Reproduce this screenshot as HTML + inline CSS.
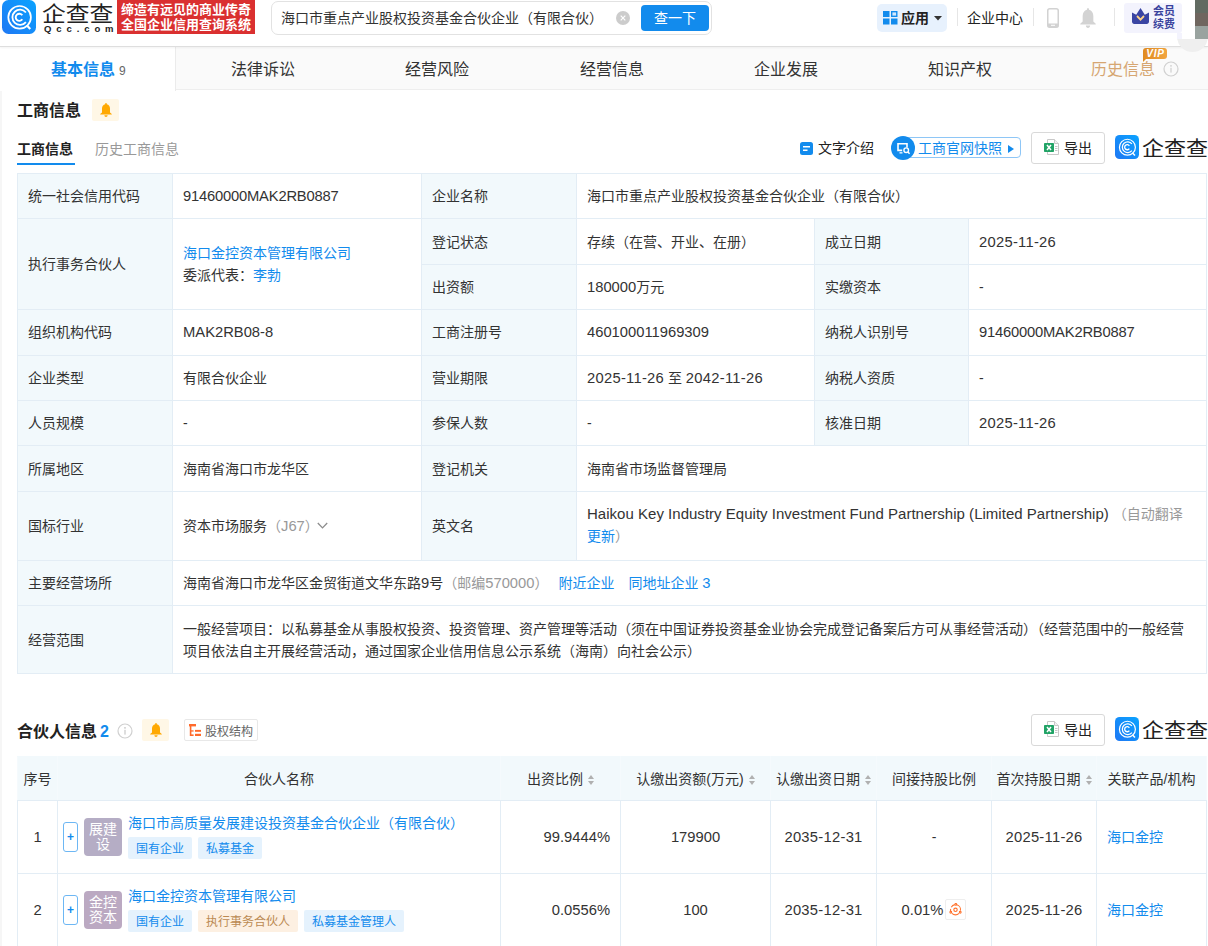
<!DOCTYPE html>
<html lang="zh-CN">
<head>
<meta charset="utf-8">
<title>海口市重点产业股权投资基金合伙企业（有限合伙） - 企查查</title>
<style>
*{box-sizing:border-box;margin:0;padding:0}
html,body{width:1208px;height:946px;overflow:hidden;background:#fff}
body{font-family:"Liberation Sans","Noto Sans CJK SC",sans-serif;font-size:14px;color:#333;position:relative;line-height:22px}
a{color:#128bed;text-decoration:none}
i{font-style:normal}
.abs{position:absolute}
#lstrip{position:absolute;left:0;top:47px;width:2px;height:899px;background:#f6f6f6}
#hd{position:absolute;left:0;top:0;width:1208px;height:47px;background:#fff;border-bottom:1px solid #dedede;box-shadow:0 1px 2px rgba(0,0,0,.05);z-index:5}
#logo-cn{position:absolute;left:42px;top:-1px;font-size:21px;line-height:30px;font-weight:400;color:#222;white-space:nowrap;transform:scaleX(1.13);transform-origin:0 0}
#logo-en{position:absolute;left:44px;top:22px;font-size:9.5px;line-height:14px;font-weight:700;color:#222;letter-spacing:4.9px;white-space:nowrap}
#slogan{position:absolute;left:117px;top:0;width:138px;height:34px;background:#da3030;color:#fff;font-weight:700;font-size:13px;line-height:15px;padding:2px 0 0 4px;white-space:nowrap}
#sbox{position:absolute;left:271px;top:1px;width:441px;height:34px;border:1px solid #e2e2e2;border-radius:7px;background:#fff}
#sbox .t{position:absolute;left:9px;top:5px;font-size:14px;line-height:22px;color:#333;white-space:nowrap}
#sbox .clr{position:absolute;left:344px;top:9px}
#sbox .btn{position:absolute;left:369px;top:3px;width:68px;height:26px;border-radius:4px;background:#128bed;color:#fff;font-size:14px;line-height:26px;text-align:center}
#app{position:absolute;left:877px;top:4px;width:70px;height:28px;border-radius:5px;background:#e7f1fd}
#app .t{position:absolute;left:24px;top:3px;font-size:14px;font-weight:700;color:#222;white-space:nowrap}
.vdiv{position:absolute;top:8px;width:1px;height:18px;background:#e6e6e6}
#vip{position:absolute;left:1124px;top:3px;width:58px;height:30px;border-radius:3px;background:#f3f3fd}
#vip .t{position:absolute;left:29px;top:2px;font-size:11px;line-height:13.4px;font-weight:700;color:#3a439e;white-space:nowrap}
#acirc{position:absolute;left:1177px;top:39px;width:31px;height:14px;overflow:hidden;z-index:6}
#acirc i{position:absolute;left:0;top:-18px;width:31px;height:31px;border-radius:50%;background:#efefef}
#alav{position:absolute;left:1177px;top:33px;width:5px;height:6px;background:#f3f3fd;z-index:6}
#awhite{position:absolute;left:1182px;top:0;width:13px;height:39px;background:#fff;z-index:7}
#avatar{position:absolute;left:1195px;top:0;width:13px;height:39px;z-index:7}
#avatar i{display:block;width:13px}
#nav{position:absolute;left:0;top:47px;width:1208px;height:43px;background:#fafafa;border-bottom:1px solid #eee}
#nav .on{position:absolute;left:0;top:0;width:176px;height:44px;background:#fff;border-right:1px solid #ebebeb}
#nav .it{position:absolute;top:11px;font-size:16px;line-height:24px;color:#333;white-space:nowrap}
#vipb{position:absolute;left:1143px;top:1px;width:24px;height:11px;border-radius:3px 3px 3px 0;background:linear-gradient(90deg,#e08a20,#f2a540);color:#fff;font-size:10px;line-height:11px;font-weight:700;font-style:italic;text-align:center;letter-spacing:.8px;padding-left:1px}
#vipb:after{content:"";position:absolute;left:0;top:11px;border-left:3px solid #e08a20;border-bottom:3px solid transparent}
h3{position:absolute;font-size:16px;line-height:24px;font-weight:700;color:#222;white-space:nowrap}
.bell{position:absolute;width:27px;height:22px;background:#fff7e6;border-radius:2px}
table{position:absolute;border-collapse:collapse;table-layout:fixed}
td,th{border:1px solid #e3edf5;font-size:14px;line-height:22px;color:#333;font-weight:400;text-align:left;vertical-align:middle;padding:0 10px}
td.k{background:#f2f9fc}
.g{color:#999}
td.c{text-align:center;padding:0}
td.r{text-align:right;padding:0 10px 0 0}
.st{margin-left:5px;vertical-align:-1px}
.exp{position:absolute;width:74px;height:32px;border:1px solid #d9d9d9;border-radius:3px;background:#fff}
.exp .t{position:absolute;left:32px;top:4px;white-space:nowrap;color:#222}
.wm{position:absolute;width:93px;height:26px}
.wm .t{position:absolute;left:27px;top:-1px;font-size:20px;line-height:30px;font-weight:400;color:#222;white-space:nowrap;transform:scaleX(1.1);transform-origin:0 0}
#snap{position:absolute;left:891px;top:136px;width:131px;height:24px}
#snap .pill{position:absolute;left:10px;top:1px;width:120px;height:21px;border:1px solid #8ec6f6;border-radius:4px;background:#fff}
#snap .t{position:absolute;left:27px;top:1px;white-space:nowrap;color:#128bed}
#gq{position:absolute;left:184px;top:719px;width:74px;height:22px;border:1px solid #e8e8e8;border-radius:2px}
#gq .t{position:absolute;left:20px;top:.5px;font-size:12px;color:#666;white-space:nowrap}
td.p{position:relative;padding:0}
.plus{position:absolute;left:5px;top:21px;width:15px;height:30px;border:1px solid #6db7f4;border-radius:3px;color:#128bed;font-size:12px;font-weight:700;line-height:28px;text-align:center}
.av{position:absolute;left:26px;top:17px;width:38px;height:38px;border-radius:4px;color:#fff;font-size:14px;line-height:15px;text-align:center;padding-top:4px}
.nm{position:absolute;left:70px;top:11px;white-space:nowrap}
.tags{position:absolute;left:70px;top:36px;white-space:nowrap;font-size:0}
.tags b{display:inline-block;height:22px;line-height:24px;overflow:hidden;vertical-align:top;padding:0 8px;margin-right:6px;border-radius:2px;background:#e5f2fd;color:#128bed;font-size:12px;font-weight:400}
.tags b.o{background:#fdf0e2;color:#bb8a52}
.gico{display:inline-block;width:21px;height:21px;border:1px solid #eee;border-radius:2px;vertical-align:middle;margin-left:2px;position:relative;top:-1px}
.gico svg{position:absolute;left:3px;top:3px}
tr.h td{border-left-color:#f5fafd;border-right-color:#f5fafd;border-top-color:#f2f9fc}
.n{font-size:14.75px}
.n.d{letter-spacing:.27px}
.n.m{letter-spacing:-.2px}
.en{font-size:15px;letter-spacing:.02px}
td.up{padding-bottom:2px}
</style>
</head>
<body>
<div id="lstrip"></div>
<div id="hd">
  <svg class="ql" width="34" height="34" viewBox="0 0 34 34" style="position:absolute;left:2px;top:0"><defs><linearGradient id="g1" x1="0" y1="1" x2="1" y2="0"><stop offset="0" stop-color="#1f78f4"/><stop offset="1" stop-color="#0aa3ff"/></linearGradient></defs><rect width="34" height="34" rx="6.5" fill="url(#g1)"/><g fill="none" stroke="#fff"><circle cx="17.6" cy="17.3" r="11.3" stroke-width="1.7"/><path d="M23.9 12.5A7.6 7.6 0 1 0 23.9 22.1" stroke-width="1.8"/><path d="M20.3 15.3A3.6 3.6 0 1 0 20.3 19.3" stroke-width="1.9"/><path d="M24.6 25.2L28.3 29" stroke-width="2.2"/></g></svg>
  <div id="logo-cn">企查查</div>
  <div id="logo-en">Qcc.com</div>
  <div id="slogan">缔造有远见的商业传奇<br>全国企业信用查询系统</div>
  <div id="sbox"><span class="t">海口市重点产业股权投资基金合伙企业（有限合伙）</span><svg class="clr" width="14" height="14" viewBox="0 0 14 14"><circle cx="7" cy="7" r="7" fill="#ccc"/><path d="M4.70 4.700l4.60 4.600M9.30 4.700l-4.60 4.60" stroke="#fff" stroke-width="1.20"/></svg><span class="btn">查一下</span></div>
  <div id="app"><svg width="15" height="14" viewBox="0 0 15 14" style="position:absolute;left:6px;top:7px"><rect x="0" y="0" width="6.50" height="6" fill="#128bed"/><rect x="8.70" y=".7" width="5.10" height="4.60" fill="#d6e9fc" stroke="#128bed" stroke-width="1.40"/><rect x="0" y="7.50" width="6.50" height="6" fill="#128bed"/><rect x="8" y="7.50" width="6.50" height="6" fill="#128bed"/></svg><span class="t">应用</span><svg width="8" height="5" viewBox="0 0 8 5" style="position:absolute;left:57px;top:12px"><path d="M0 0h8L4 4.500z" fill="#333"/></svg></div>
  <div class="vdiv" style="left:957px"></div>
  <div class="abs" style="left:967px;top:7px;white-space:nowrap;color:#222">企业中心</div>
  <div class="vdiv" style="left:1033px"></div>
  <svg width="12" height="20" viewBox="0 0 12 20" style="position:absolute;left:1047px;top:8px"><rect x=".75" y=".75" width="10.50" height="18.50" rx="2" fill="#fff" stroke="#d2d2d2" stroke-width="1.50"/><rect x=".75" y="15.50" width="10.50" height="3.750" fill="#d2d2d2"/><rect x="4" y="16.80" width="4" height="1" fill="#fff"/></svg>
  <svg width="16" height="20" viewBox="0 0 12 14" preserveAspectRatio="none" style="position:absolute;left:1080px;top:8px"><path fill="#d3d3d3" d="M5.2 1.2C5.2 .5 5.5 0 6 0C6.5 0 6.8 .5 6.8 1.2C8.8 1.7 10 3.4 10 5.6L10 9.4L11.8 11L11.8 11.6L.2 11.6L.2 11L2 9.4L2 5.6C2 3.4 3.2 1.7 5.2 1.2ZM4.4 12.3L7.6 12.3C7.6 13.3 6.9 14 6 14C5.1 14 4.4 13.3 4.4 12.3Z"/></svg>
  <div class="vdiv" style="left:1114px"></div>
  <div id="vip"><svg width="17" height="16" viewBox="0 0 17 16" style="position:absolute;left:8px;top:5px"><path d="M0 4.500l4.20 2.300L8.50 0l4.30 6.800L17 4.500v9.300c0 1.20-1 2.20-2.20 2.200H2.200C1 16 0 15 0 13.800z" fill="#3a45a3"/><path d="M5 8l3.50 3.600L12 8" fill="none" stroke="#ffd48a" stroke-width="1.80"/></svg><span class="t">会员<br>续费</span></div>
  <div id="vipedge"></div>
</div>
<div id="acirc"><i></i></div><div id="alav"></div>
<div id="awhite"></div>
<div id="avatar"><i style="background:#626b62;height:13px"></i><i style="background:#6f665f;height:13px"></i><i style="background:#99a39f;height:13px"></i></div>
<div id="nav">
  <div class="on"></div>
  <div class="it" style="left:51px;color:#128bed;font-weight:700">基本信息<span style="font-size:12px;font-weight:400;color:#666;margin-left:4px">9</span></div>
  <div class="it" style="left:231px">法律诉讼</div>
  <div class="it" style="left:405px">经营风险</div>
  <div class="it" style="left:580px">经营信息</div>
  <div class="it" style="left:754px">企业发展</div>
  <div class="it" style="left:928px">知识产权</div>
  <div class="it" style="left:1091px;color:#d6a672">历史信息</div>
  <div id="vipb"><span>VIP</span></div>
  <svg width="16" height="16" viewBox="0 0 16 16" style="position:absolute;left:1163px;top:14px"><circle cx="8" cy="8" r="7" fill="none" stroke="#d0d0d0" stroke-width="1.20"/><circle cx="8" cy="4.80" r=".9" fill="#d0d0d0"/><rect x="7.40" y="6.80" width="1.20" height="4.80" fill="#d0d0d0"/></svg>
</div>
<h3 style="left:17px;top:99px">工商信息</h3>
<div class="bell" style="left:92px;top:99px"><svg width="12" height="14" viewBox="0 0 12 14" preserveAspectRatio="none" style="position:absolute;left:8px;top:4px"><path fill="#ffa800" d="M5.2 1.2C5.2 .5 5.5 0 6 0C6.5 0 6.8 .5 6.8 1.2C8.8 1.7 10 3.4 10 5.6L10 9.4L11.8 11L11.8 11.6L.2 11.6L.2 11L2 9.4L2 5.6C2 3.4 3.2 1.7 5.2 1.2ZM4.4 12.3L7.6 12.3C7.6 13.3 6.9 14 6 14C5.1 14 4.4 13.3 4.4 12.3Z"/></svg></div>
<div class="abs" style="left:17px;top:138px;font-size:14px;font-weight:700;color:#222;white-space:nowrap">工商信息</div>
<div class="abs" style="left:95px;top:138px;font-size:14px;color:#999;white-space:nowrap">历史工商信息</div>
<div class="abs" style="left:17px;top:163px;width:58px;height:2px;background:#128bed"></div>
<svg width="13" height="13" viewBox="0 0 13 13" style="position:absolute;left:800px;top:142px"><rect width="13" height="13" rx="2.50" fill="#128bed"/><rect x="3" y="4" width="7" height="1.50" fill="#fff"/><rect x="3" y="7.50" width="4.50" height="1.50" fill="#fff"/></svg>
<div class="abs" style="left:818px;top:137px;white-space:nowrap;color:#222">文字介绍</div>
<div id="snap"><i class="pill"></i><svg width="24" height="24" viewBox="0 0 24 24" style="position:absolute;left:0;top:0"><circle cx="12" cy="12" r="12" fill="#128bed"/><path d="M6.20 7h10.600v4.500h-1.600v-2.900H7.800v5h3.400v1.600H6.200z" fill="#fff"/><path d="M8.50 16.200h3v1.300h-3z" fill="#fff"/><circle cx="15.20" cy="14.20" r="2.30" fill="none" stroke="#fff" stroke-width="1.40"/><path d="M16.90 16l1.70 1.70" stroke="#fff" stroke-width="1.50"/></svg><span class="t">工商官网快照</span><svg width="6" height="8" viewBox="0 0 6 8" style="position:absolute;left:116.5px;top:8.5px"><path d="M0 0l6 4-6 4z" fill="#128bed"/></svg></div>
<div class="exp" style="left:1031px;top:132px"><svg width="16" height="16" viewBox="0 0 16 16" style="position:absolute;left:12px;top:6px"><path d="M3.5.5h7l4 4v11h-11z" fill="#fff" stroke="#c8c8c8" stroke-width="1"/><path d="M10.5.5v4h4" fill="#f2f2f2" stroke="#c8c8c8" stroke-width="1"/><path d="M11 7.5h2.5M11 9.5h2.5M11 11.5h2.5" stroke="#c8c8c8" stroke-width="1"/><rect x="0" y="4" width="10" height="9" rx=".8" fill="#21a366"/><path d="M3 6l4 5M7 6l-4 5" stroke="#fff" stroke-width="1.5"/></svg><span class="t">导出</span></div>
<div class="wm" style="left:1115px;top:135px"><svg class="ql" width="24" height="24" viewBox="0 0 34 34" style="position:absolute;left:0;top:0"><defs><linearGradient id="g2" x1="0" y1="1" x2="1" y2="0"><stop offset="0" stop-color="#1f78f4"/><stop offset="1" stop-color="#0aa3ff"/></linearGradient></defs><rect width="34" height="34" rx="6.5" fill="url(#g2)"/><g fill="none" stroke="#fff"><circle cx="17.6" cy="17.3" r="11.3" stroke-width="1.7"/><path d="M23.9 12.5A7.6 7.6 0 1 0 23.9 22.1" stroke-width="1.8"/><path d="M20.3 15.3A3.6 3.6 0 1 0 20.3 19.3" stroke-width="1.9"/><path d="M24.6 25.2L28.3 29" stroke-width="2.2"/></g></svg><span class="t">企查查</span></div>

<table id="t1" style="left:17px;top:173px;width:1189px">
<colgroup><col style="width:155px"><col style="width:249px"><col style="width:155px"><col style="width:238px"><col style="width:154px"><col style="width:238px"></colgroup>
<tr style="height:45.4px"><td class="k">统一社会信用代码</td><td><span class="n m">91460000MAK2RB0887</span></td><td class="k">企业名称</td><td colspan="3">海口市重点产业股权投资基金合伙企业（有限合伙）</td></tr>
<tr style="height:45.4px"><td class="k" rowspan="2">执行事务合伙人</td><td rowspan="2"><a>海口金控资本管理有限公司</a><br>委派代表：<a>李勃</a></td><td class="k">登记状态</td><td>存续（在营、开业、在册）</td><td class="k">成立日期</td><td><span class="n d">2025-11-26</span></td></tr>
<tr style="height:45.4px"><td class="k">出资额</td><td><span class="n">180000</span>万元</td><td class="k">实缴资本</td><td>-</td></tr>
<tr style="height:45.4px"><td class="k">组织机构代码</td><td><span class="n">MAK2RB08-8</span></td><td class="k">工商注册号</td><td><span class="n">460100011969309</span></td><td class="k">纳税人识别号</td><td><span class="n m">91460000MAK2RB0887</span></td></tr>
<tr style="height:45.4px"><td class="k">企业类型</td><td>有限合伙企业</td><td class="k">营业期限</td><td><span class="n d">2025-11-26</span> 至 <span class="n d">2042-11-26</span></td><td class="k">纳税人资质</td><td>-</td></tr>
<tr style="height:45.4px"><td class="k">人员规模</td><td>-</td><td class="k">参保人数</td><td>-</td><td class="k">核准日期</td><td><span class="n d">2025-11-26</span></td></tr>
<tr style="height:45.4px"><td class="k">所属地区</td><td>海南省海口市龙华区</td><td class="k">登记机关</td><td colspan="3">海南省市场监督管理局</td></tr>
<tr style="height:69.2px"><td class="k">国标行业</td><td>资本市场服务<span class="g">（<span class="n">J67</span>）</span><svg width="11" height="8" viewBox="0 0 11 8" style="margin-left:-2px;vertical-align:1px"><path d="M.8 1l4.700 4.900 4.700-4.900" fill="none" stroke="#8c8c8c" stroke-width="1.300"/></svg></td><td class="k">英文名</td><td colspan="3" class="up"><span class="en">Haikou Key Industry Equity Investment Fund Partnership (Limited Partnership)</span><span class="g" style="margin-left:4px">（自动翻译</span><br><a>更新</a><span class="g">）</span></td></tr>
<tr style="height:45.4px"><td class="k">主要经营场所</td><td colspan="5">海南省海口市龙华区金贸街道文华东路<span class="n">9</span>号<span class="g">（邮编<span class="n">570000</span>）</span><a style="margin-left:10px">附近企业</a><a style="margin-left:14px">同地址企业 <span class="n">3</span></a></td></tr>
<tr style="height:67.8px"><td class="k">经营范围</td><td colspan="5">一般经营项目：以私募基金从事股权投资、投资管理、资产管理等活动（须在中国证券投资基金业协会完成登记备案后方可从事经营活动）（经营范围中的一般经营项目依法自主开展经营活动，通过国家企业信用信息公示系统（海南）向社会公示）</td></tr>
</table>

<h3 style="left:17px;top:719.5px">合伙人信息<span style="color:#128bed;margin-left:3px">2</span></h3>
<svg width="16" height="16" viewBox="0 0 16 16" style="position:absolute;left:117px;top:723px"><circle cx="8" cy="8" r="7" fill="none" stroke="#d0d0d0" stroke-width="1.20"/><circle cx="8" cy="4.80" r=".9" fill="#c8c8c8"/><rect x="7.40" y="6.80" width="1.20" height="4.80" fill="#c8c8c8"/></svg>
<div class="bell" style="left:142px;top:719px"><svg width="12" height="14" viewBox="0 0 12 14" preserveAspectRatio="none" style="position:absolute;left:8px;top:4px"><path fill="#ffa800" d="M5.2 1.2C5.2 .5 5.5 0 6 0C6.5 0 6.8 .5 6.8 1.2C8.8 1.7 10 3.4 10 5.6L10 9.4L11.8 11L11.8 11.6L.2 11.6L.2 11L2 9.4L2 5.6C2 3.4 3.2 1.7 5.2 1.2ZM4.4 12.3L7.6 12.3C7.6 13.3 6.9 14 6 14C5.1 14 4.4 13.3 4.4 12.3Z"/></svg></div>
<div id="gq"><svg width="12" height="12" viewBox="0 0 12 12" style="position:absolute;left:4px;top:4.4px"><g fill="#ff6a2b"><rect x="0" y="0" width="7" height="2.4"/><rect x=".8" y="2" width="1.6" height="10"/><rect x="2" y="6.3" width="2.6" height="1.3"/><rect x="6" y="5.9" width="6" height="1.9"/><rect x="2" y="10.4" width="2.6" height="1.6"/><rect x="6" y="9.8" width="6" height="2.2"/></g></svg><span class="t">股权结构</span></div>
<div class="exp" style="left:1031px;top:714px"><svg width="16" height="16" viewBox="0 0 16 16" style="position:absolute;left:12px;top:6px"><path d="M3.5.5h7l4 4v11h-11z" fill="#fff" stroke="#c8c8c8" stroke-width="1"/><path d="M10.5.5v4h4" fill="#f2f2f2" stroke="#c8c8c8" stroke-width="1"/><path d="M11 7.5h2.5M11 9.5h2.5M11 11.5h2.5" stroke="#c8c8c8" stroke-width="1"/><rect x="0" y="4" width="10" height="9" rx=".8" fill="#21a366"/><path d="M3 6l4 5M7 6l-4 5" stroke="#fff" stroke-width="1.5"/></svg><span class="t">导出</span></div>
<div class="wm" style="left:1115px;top:717px"><svg class="ql" width="24" height="24" viewBox="0 0 34 34" style="position:absolute;left:0;top:0"><defs><linearGradient id="g3" x1="0" y1="1" x2="1" y2="0"><stop offset="0" stop-color="#1f78f4"/><stop offset="1" stop-color="#0aa3ff"/></linearGradient></defs><rect width="34" height="34" rx="6.5" fill="url(#g3)"/><g fill="none" stroke="#fff"><circle cx="17.6" cy="17.3" r="11.3" stroke-width="1.7"/><path d="M23.9 12.5A7.6 7.6 0 1 0 23.9 22.1" stroke-width="1.8"/><path d="M20.3 15.3A3.6 3.6 0 1 0 20.3 19.3" stroke-width="1.9"/><path d="M24.6 25.2L28.3 29" stroke-width="2.2"/></g></svg><span class="t">企查查</span></div>

<table id="t2" style="left:17px;top:756px;width:1189px">
<colgroup><col style="width:40px"><col style="width:443px"><col style="width:120px"><col style="width:150px"><col style="width:106px"><col style="width:115px"><col style="width:105px"><col style="width:110px"></colgroup>
<tr style="height:44px" class="h"><td class="k c">序号</td><td class="k c">合伙人名称</td><td class="k c">出资比例<svg class="st" width="6" height="10" viewBox="0 0 6 10"><path fill="#b0b0b0" d="M3 0l3 4H0zM3 10L0 6h6z"/></svg></td><td class="k c">认缴出资额(万元)<svg class="st" width="6" height="10" viewBox="0 0 6 10"><path fill="#b0b0b0" d="M3 0l3 4H0zM3 10L0 6h6z"/></svg></td><td class="k c">认缴出资日期<svg class="st" width="6" height="10" viewBox="0 0 6 10"><path fill="#b0b0b0" d="M3 0l3 4H0zM3 10L0 6h6z"/></svg></td><td class="k c">间接持股比例</td><td class="k c">首次持股日期<svg class="st" width="6" height="10" viewBox="0 0 6 10"><path fill="#b0b0b0" d="M3 0l3 4H0zM3 10L0 6h6z"/></svg></td><td class="k c">关联产品/机构</td></tr>
<tr style="height:73px"><td class="c"><span class="n">1</span></td><td class="p"><i class="plus">+</i><i class="av" style="background:#b5adc5">展建<br>设</i><a class="nm">海口市高质量发展建设投资基金合伙企业（有限合伙）</a><span class="tags"><b>国有企业</b><b>私募基金</b></span></td><td class="r"><span class="n">99.9444%</span></td><td class="c"><span class="n">179900</span></td><td class="c"><span class="n d">2035-12-31</span></td><td class="c">-</td><td class="c"><span class="n d">2025-11-26</span></td><td><a>海口金控</a></td></tr>
<tr style="height:73px"><td class="c"><span class="n">2</span></td><td class="p"><i class="plus">+</i><i class="av" style="background:#bba9c2">金控<br>资本</i><a class="nm">海口金控资本管理有限公司</a><span class="tags"><b>国有企业</b><b class="o">执行事务合伙人</b><b>私募基金管理人</b></span></td><td class="r"><span class="n">0.0556%</span></td><td class="c"><span class="n">100</span></td><td class="c"><span class="n d">2035-12-31</span></td><td class="c"><span class="n">0.01%</span><i class="gico"><svg width="13" height="13" viewBox="0 0 13 13"><g fill="none" stroke="#ff722d" stroke-width="1.10"><circle cx="6.50" cy="6.80" r="1.70"/><path d="M2.30 4.300A5 5 0 0 1 5.80 1.600M7.80 1.800A5 5 0 0 1 11.40 7.600M10 10.400A5 5 0 0 1 3 10.400M1.60 8.400A5 5 0 0 1 1.70 6"/><circle cx="6.80" cy="1.40" r=".9"/><circle cx="11.20" cy="9.20" r=".9"/><circle cx="1.80" cy="9.20" r=".9"/></g></svg></i></td><td class="c"><span class="n d">2025-11-26</span></td><td><a>海口金控</a></td></tr>
</table>
</body>
</html>
